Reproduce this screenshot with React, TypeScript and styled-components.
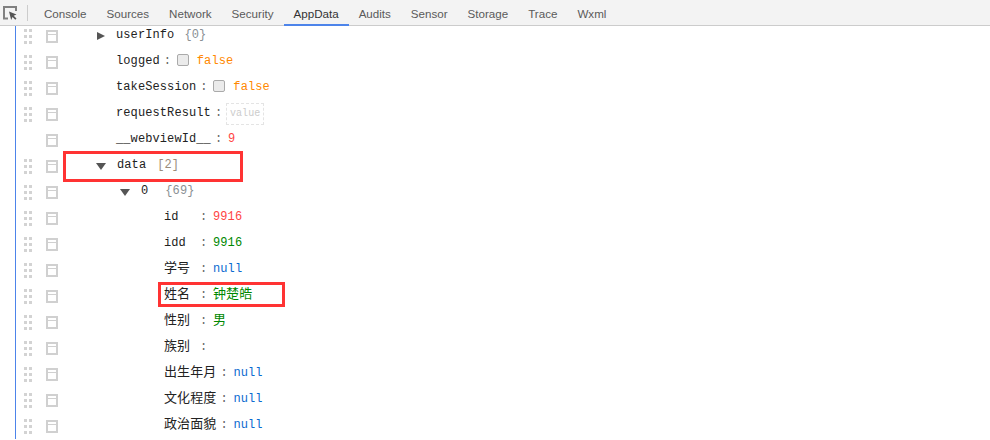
import React from 'react';
import styled, { createGlobalStyle } from 'styled-components';

const GlobalStyle = createGlobalStyle`
  html, body {
    margin: 0;
    padding: 0;
    background: #fff;
    overflow: hidden;
  }
`;

const tabs = ['Console', 'Sources', 'Network', 'Security', 'AppData', 'Audits', 'Sensor', 'Storage', 'Trace', 'Wxml'];

type ValueKind = 'number' | 'numberGreen' | 'string' | 'null' | 'bool';

type RowData = {
  level: number;
  name: string;
  keyWidth?: number;
  arrow?: 'right' | 'down';
  count?: string;
  countGap?: number;
  countTone?: 'object' | 'array';
  value?: string;
  kind?: ValueKind;
  check?: boolean;
  editable?: boolean;
  noGrip?: boolean;
};

const rows: RowData[] = [
  { level: 0, name: 'userInfo', arrow: 'right', count: '{0}', countGap: 10 },
  { level: 0, name: 'logged', check: true, value: 'false', kind: 'bool' },
  { level: 0, name: 'takeSession', check: true, value: 'false', kind: 'bool' },
  { level: 0, name: 'requestResult', editable: true },
  { level: 0, name: '__webviewId__', value: '9', kind: 'number', noGrip: true },
  { level: 0, name: 'data', arrow: 'down', count: '[2]', countGap: 11, countTone: 'array' },
  { level: 1, name: '0', arrow: 'down', count: '{69}', countGap: 17 },
  { level: 2, name: 'id', keyWidth: 32, value: '9916', kind: 'number' },
  { level: 2, name: 'idd', keyWidth: 32, value: '9916', kind: 'numberGreen' },
  { level: 2, name: '学号', keyWidth: 32, value: 'null', kind: 'null' },
  { level: 2, name: '姓名', keyWidth: 32, value: '钟楚皓', kind: 'string' },
  { level: 2, name: '性别', keyWidth: 32, value: '男', kind: 'string' },
  { level: 2, name: '族别', keyWidth: 32 },
  { level: 2, name: '出生年月', value: 'null', kind: 'null' },
  { level: 2, name: '文化程度', value: 'null', kind: 'null' },
  { level: 2, name: '政治面貌', value: 'null', kind: 'null' },
];

const valueColors: Record<ValueKind, string> = {
  number: '#f44',
  numberGreen: '#080',
  string: '#080',
  null: '#0a6ad0',
  bool: '#f80',
};

const isCjk = (s: string) => /[^\x00-\x7f]/.test(s);

const App: React.FC = () => (
  <Page>
    <GlobalStyle />
    <Toolbar>
      <InspectIcon width="14" height="14" viewBox="0 0 14 14">
        <path d="M5 12.5H1V1h12v4" fill="none" stroke="#808080" strokeWidth="2" />
        <path d="M6 5.5l7.5 3-2.8 1.3 2.8 2.8-1.2 1.2-2.8-2.8L8.2 14z" fill="#555" />
      </InspectIcon>
      <ToolbarDivider />
      <TabList>
        {tabs.map((t) => (
          <Tab key={t} $active={t === 'AppData'}>
            {t}
          </Tab>
        ))}
      </TabList>
    </Toolbar>

    <Tree>
      {rows.map((r) => (
        <Row key={r.name + r.level}>
          <Gutter>
            <Grip $hidden={r.noGrip}>
              {Array.from({ length: 6 }).map((_, i) => (
                <GripDot key={i} />
              ))}
            </Grip>
            <RowBox>
              <RowBoxLine />
            </RowBox>
          </Gutter>
          <Content $level={r.level} $hasArrow={!!r.arrow}>
            {r.arrow && <Arrow $dir={r.arrow} />}
            {r.arrow ? (
              <>
                <BranchKey>{r.name}</BranchKey>
                <Count $tone={r.countTone} $gap={r.countGap}>
                  {r.count}
                </Count>
              </>
            ) : (
              <>
                <Key $width={r.keyWidth} $cjk={isCjk(r.name)}>
                  {r.name}
                </Key>
                <Colon>:</Colon>
                {r.check && <Check />}
                {r.editable && <EditValue>value</EditValue>}
                {r.value && r.kind && (
                  <Value $kind={r.kind} $cjk={isCjk(r.value)}>
                    {r.value}
                  </Value>
                )}
              </>
            )}
          </Content>
        </Row>
      ))}
      <Highlight $left={63} $top={128} $width={180} $height={31} />
      <Highlight $left={158} $top={259} $width={127} $height={25} />
    </Tree>
  </Page>
);

const Page = styled.div`
  width: 990px;
  height: 440px;
  overflow: hidden;
  background: #fff;
  font-family: 'Liberation Mono', 'Noto Sans CJK SC', monospace;
`;

const Toolbar = styled.div`
  position: relative;
  z-index: 1;
  display: flex;
  align-items: center;
  height: 25px;
  background: #f3f3f3;
  border-bottom: 1px solid #ccc;
`;

const InspectIcon = styled.svg`
  margin-left: 3px;
  flex-shrink: 0;
`;

const ToolbarDivider = styled.div`
  width: 1px;
  height: 16px;
  margin-left: 10px;
  background: #ccc;
`;

const TabList = styled.div`
  display: flex;
  height: 100%;
  margin-left: 6px;
`;

const Tab = styled.div<{ $active?: boolean }>`
  display: flex;
  align-items: center;
  height: 26px;
  padding: 2px 10px 0;
  margin-bottom: -1px;
  font: 11.6px 'Liberation Sans', Arial, sans-serif;
  color: ${({ $active }) => ($active ? '#333' : '#5a5a5a')};
  border-bottom: 2px solid ${({ $active }) => ($active ? '#4d84ea' : 'transparent')};
  box-sizing: border-box;
`;

const Tree = styled.div`
  position: relative;
  margin-top: -3px;
  margin-left: 15px;
  border-left: 1px solid #4d84ea;
`;

const Row = styled.div`
  display: flex;
  align-items: center;
  height: 26px;
`;

const Gutter = styled.div`
  display: flex;
  align-items: center;
  width: 81px;
  padding-left: 8px;
  box-sizing: border-box;
  flex-shrink: 0;
`;

const Grip = styled.div<{ $hidden?: boolean }>`
  display: grid;
  grid-template-columns: 3px 3px;
  grid-auto-rows: 3px;
  column-gap: 2px;
  row-gap: 3px;
  width: 8px;
  visibility: ${({ $hidden }) => ($hidden ? 'hidden' : 'visible')};
`;

const GripDot = styled.span`
  background: #d3d3d3;
`;

const RowBox = styled.div`
  width: 12px;
  height: 13px;
  margin-left: 14px;
  border: 2px solid #d0d0d0;
  box-sizing: border-box;
`;

const RowBoxLine = styled.div`
  height: 1px;
  margin-top: 2px;
  background: #d0d0d0;
`;

const Content = styled.div<{ $level: number; $hasArrow: boolean }>`
  display: flex;
  align-items: center;
  margin-bottom: 2px;
  font-size: 12px;
  line-height: 16px;
  letter-spacing: 0.1px;
  padding-left: ${({ $level, $hasArrow }) => {
    if ($hasArrow) return $level === 0 ? 0 : 24;
    return $level === 2 ? 67 : 19;
  }}px;
`;

const Arrow = styled.span<{ $dir: 'right' | 'down' }>`
  width: 0;
  height: 0;
  margin-top: 2px;
  ${({ $dir }) =>
    $dir === 'right'
      ? `
    margin-right: 11px;
    border-top: 4px solid transparent;
    border-bottom: 4px solid transparent;
    border-left: 8px solid #555;
  `
      : `
    margin-left: -1px;
    margin-right: 11px;
    border-left: 5px solid transparent;
    border-right: 5px solid transparent;
    border-top: 7px solid #555;
  `}
`;

const BranchKey = styled.span`
  color: #222;
`;

const Count = styled.span<{ $tone?: 'object' | 'array'; $gap?: number }>`
  margin-left: ${({ $gap }) => $gap ?? 10}px;
  color: ${({ $tone }) => ($tone === 'array' ? '#9a8c7c' : '#8a9094')};
`;

const Key = styled.span<{ $width?: number; $cjk?: boolean }>`
  color: #222;
  font-size: ${({ $cjk }) => ($cjk ? '13px' : '12px')};
  ${({ $width }) => ($width ? `width: ${$width}px;` : '')}
`;

const Colon = styled.span`
  width: 7px;
  margin: 0 6px 0 4px;
  color: #666;
  text-align: center;
`;

const Check = styled.span`
  width: 12px;
  height: 12px;
  margin: -2px 8px 0 0;
  border: 1px solid #aaa;
  border-radius: 2px;
  background: #ebebeb;
  box-sizing: border-box;
`;

const EditValue = styled.span`
  height: 22px;
  margin: 2px 0 0 -2px;
  padding: 0 3px;
  line-height: 20px;
  border: 1px dashed #e4e4e4;
  box-sizing: border-box;
  color: #ccc;
  font-size: 10px;
`;

const Value = styled.span<{ $kind: ValueKind; $cjk?: boolean }>`
  color: ${({ $kind }) => valueColors[$kind]};
  font-size: ${({ $cjk }) => ($cjk ? '13px' : '12px')};
`;

const Highlight = styled.div<{ $left: number; $top: number; $width: number; $height: number }>`
  position: absolute;
  left: ${({ $left }) => $left - 16}px;
  top: ${({ $top }) => $top}px;
  width: ${({ $width }) => $width}px;
  height: ${({ $height }) => $height}px;
  border: 3px solid #f33;
  box-sizing: border-box;
  pointer-events: none;
`;

export default App;
